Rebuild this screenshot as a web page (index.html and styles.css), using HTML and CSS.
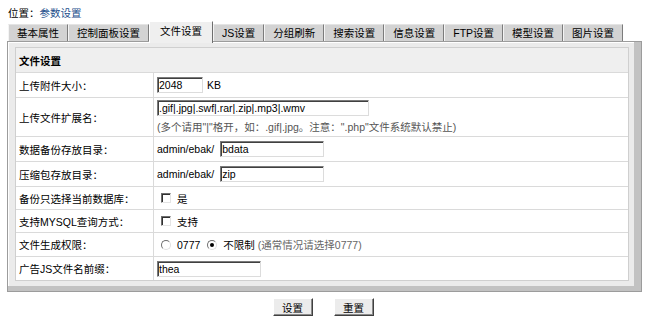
FILE: index.html
```html
<!DOCTYPE html>
<html>
<head>
<meta charset="utf-8">
<link rel="stylesheet" href="styles.css">
</head>
<body>
<div class="loc">位置：<a class="loc-link">参数设置</a></div>
<div class="tabs">
  <div class="tab">基本属性</div>
  <div class="tab">控制面板设置</div>
  <div class="tab active">文件设置</div>
  <div class="tab">JS设置</div>
  <div class="tab">分组刷新</div>
  <div class="tab">搜索设置</div>
  <div class="tab">信息设置</div>
  <div class="tab">FTP设置</div>
  <div class="tab">模型设置</div>
  <div class="tab">图片设置</div>
</div>
<div class="panel">
  <div class="form">
    <div class="row head">文件设置</div>
    <div class="row r25">
      <div class="label">上传附件大小：</div>
      <div class="value"><input class="txt w-size" value="2048"><span class="unit">KB</span></div>
    </div>
    <div class="row r39">
      <div class="label">上传文件扩展名：</div>
      <div class="value stack">
        <input class="txt w-ext" value=".gif|.jpg|.swf|.rar|.zip|.mp3|.wmv">
        <span class="hint">(多个请用"|"格开，如：.gif|.jpg。注意：".php"文件系统默认禁止)</span>
      </div>
    </div>
    <div class="row r25">
      <div class="label">数据备份存放目录：</div>
      <div class="value"><span class="prefix">admin/ebak/</span><input class="txt w-dir" value="bdata"></div>
    </div>
    <div class="row r25">
      <div class="label">压缩包存放目录：</div>
      <div class="value"><span class="prefix">admin/ebak/</span><input class="txt w-dir" value="zip"></div>
    </div>
    <div class="row r23">
      <div class="label">备份只选择当前数据库：</div>
      <div class="value"><input type="checkbox" class="chk"><span class="opt">是</span></div>
    </div>
    <div class="row r23">
      <div class="label">支持MYSQL查询方式：</div>
      <div class="value"><input type="checkbox" class="chk"><span class="opt">支持</span></div>
    </div>
    <div class="row r24">
      <div class="label">文件生成权限：</div>
      <div class="value"><input type="radio" name="perm" class="rad"><span class="opt">0777</span><input type="radio" name="perm" class="rad" checked><span class="opt">不限制</span><span class="note">(通常情况请选择0777)</span></div>
    </div>
    <div class="row r24 last">
      <div class="label">广告JS文件名前缀：</div>
      <div class="value"><input class="txt w-js" value="thea"></div>
    </div>
  </div>
</div>
<div class="actions">
  <button class="btn">设置</button>
  <button class="btn">重置</button>
</div>
</body>
</html>
```

FILE: styles.css
```css
html, body {
  margin: 0;
  padding: 0;
  background: #ffffff;
}
body {
  font-family: "Liberation Sans", "Noto Sans CJK SC", sans-serif;
  font-size: 10.5px;
  color: #000;
  width: 650px;
}
.loc {
  margin: 5px 0 0 8px;
  height: 16px;
  line-height: 16px;
}
.loc-link {
  color: #1d4f8c;
  text-decoration: none;
}
.tabs {
  display: flex;
  align-items: flex-end;
  height: 20px;
  margin-left: 8px;
  position: relative;
  z-index: 2;
}
.tab {
  height: 17px;
  line-height: 17px;
  padding: 0 8px;
  background: #d3d3d3;
  border-left: 1px solid #f4f4f4;
  border-right: 1px solid #7c7c7c;
  border-top: 1px solid #e4e4e4;
  box-sizing: border-box;
  white-space: nowrap;
}
.tab.active {
  height: 22px;
  line-height: 19px;
  padding: 0 10px;
  margin-bottom: -2px;
  background: #efefef;
  border-top: 1px solid #ffffff;
  border-left: 1px solid #ffffff;
  border-right: 1px solid #6e6e6e;
}
.panel {
  margin-left: 7px;
  width: 635px;
  box-sizing: border-box;
  border: 1px solid #9c9c9c;
  background: #ebebeb;
  padding: 5px 12px 10px 7px;
  box-shadow: inset -7px -5px 0 #c2c2c2, inset 1px 1px 0 #ffffff;
  position: relative;
  z-index: 1;
}
.form {
  border: 1px solid #cfcfcf;
  background: #ffffff;
}
.row {
  display: grid;
  grid-template-columns: 138px 1fr;
  border-bottom: 1px solid #dadada;
  box-sizing: border-box;
}
.row.last {
  border-bottom: none;
}
.head {
  display: flex;
  align-items: center;
  height: 25px;
  padding-left: 3px;
  background: #efefef;
  font-weight: bold;
}
.r25 { height: 25px; }
.r39 { height: 39px; }
.r23 { height: 23px; }
.r24 { height: 24px; }
.row.last { height: 23px; }
.label {
  display: flex;
  align-items: center;
  padding-left: 3px;
  border-right: 1px solid #dadada;
  box-sizing: border-box;
  white-space: nowrap;
}
.value {
  display: flex;
  align-items: center;
  padding-left: 3px;
  white-space: nowrap;
}
.value.stack {
  flex-direction: column;
  align-items: flex-start;
  justify-content: center;
  gap: 3px;
}
.txt {
  font-family: "Liberation Sans", "Noto Sans CJK SC", sans-serif;
  font-size: 10.5px;
  height: 16px;
  box-sizing: border-box;
  padding: 0 1px;
  margin: 0;
  background: #ffffff;
  color: #000;
  border: 1px solid;
  border-color: #7a7a7a #dcdcdc #dcdcdc #7a7a7a;
  box-shadow: inset 1px 1px 0 #404040;
  outline: none;
}
.w-size { width: 46px; }
.w-ext { width: 212px; }
.w-dir { width: 104px; }
.w-js { width: 104px; }
.unit {
  margin-left: 4px;
}
.prefix {
  margin-right: 6px;
}
.hint {
  color: #555555;
}
.chk {
  appearance: none;
  -webkit-appearance: none;
  width: 10px;
  height: 10px;
  margin: 0 0 0 4px;
  box-sizing: border-box;
  background: #ffffff;
  border: 1px solid;
  border-color: #6e6e6e #e4e4e4 #e4e4e4 #6e6e6e;
  box-shadow: inset 1px 1px 0 #303030;
}
.rad {
  appearance: none;
  -webkit-appearance: none;
  width: 10px;
  height: 10px;
  margin: 0 0 0 4px;
  box-sizing: border-box;
  border-radius: 50%;
  background: #ffffff;
  border: 1px solid;
  border-color: #6e6e6e #e0e0e0 #e0e0e0 #6e6e6e;
  position: relative;
}
.rad:checked::after {
  content: "";
  position: absolute;
  left: 2px;
  top: 2px;
  width: 4px;
  height: 4px;
  border-radius: 50%;
  background: #000000;
}
.opt {
  margin-left: 6px;
  margin-right: 3px;
}
.note {
  color: #666666;
}
.actions {
  display: flex;
  justify-content: center;
  gap: 21px;
  margin-top: 6px;
  width: 646px;
}
.btn {
  font-family: "Liberation Sans", "Noto Sans CJK SC", sans-serif;
  font-size: 10.5px;
  width: 40px;
  height: 18px;
  padding: 0;
  margin: 0;
  background: #ececec;
  color: #000;
  border: 1px solid;
  border-color: #ffffff #404040 #404040 #ffffff;
  box-shadow: inset -1px -1px 0 #8a8a8a;
}
```
